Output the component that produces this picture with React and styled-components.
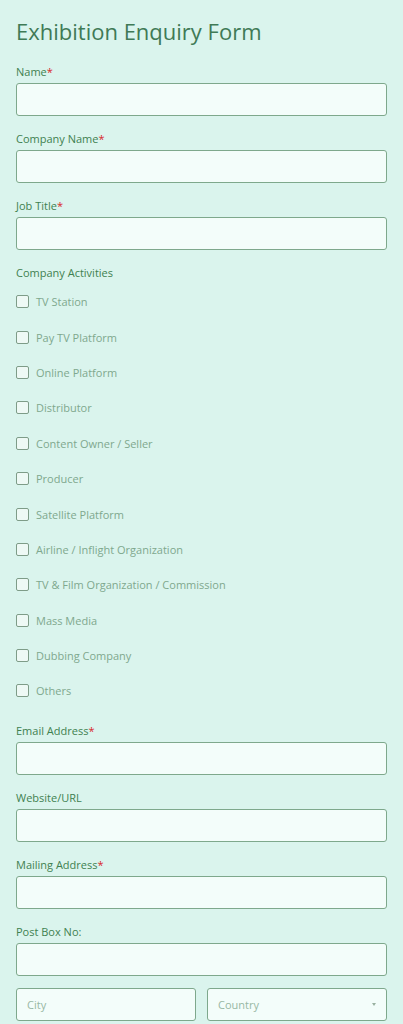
import React from 'react';
import styled, { createGlobalStyle } from 'styled-components';

const GlobalStyle = createGlobalStyle`
body {
  margin: 0;
  background: #daf4ed;
  font-family: "Open Sans", "Liberation Sans", sans-serif;
}
`;

const Page = styled.div`
padding: 16px 16px 0 16px;
background: #daf4ed;
min-height: 1024px;
box-sizing: border-box;
`;

const Title = styled.h1`
margin: 0 0 19px 0;
font-size: 22px;
line-height: 30px;
font-weight: 400;
color: #3f7a56;
letter-spacing: 0;
`;

const Field = styled.div`
display: flex;
flex-direction: column;
margin-bottom: 16px;
`;

const Label = styled.label`
font-size: 11px;
line-height: 14px;
color: #3f8150;
margin-bottom: 4px;
`;

const Star = styled.span`
color: #d9262a;
`;

const Input = styled.input`
box-sizing: border-box;
width: 100%;
height: 33px;
background: #f3fdfa;
border: 1px solid #7ea88c;
border-radius: 3px;
padding: 0 10px;
font-family: inherit;
font-size: 11px;
color: #6f9a7e;
outline: none;
&::placeholder {
  color: #98b8a4;
}
`;

const Group = styled.div`
display: flex;
flex-direction: column;
margin-bottom: 15px;
`;

const GroupLabel = styled(Label)`
margin-bottom: 4px;
`;

const Option = styled.label`
display: flex;
align-items: center;
height: 35.4px;
gap: 7px;
font-size: 11px;
color: #7fa88e;
`;

const Box = styled.span`
box-sizing: border-box;
width: 13px;
height: 13px;
border: 1px solid #7e9c88;
border-radius: 2px;
background: #eef9f5;
flex: none;
`;

const Row = styled.div`
display: grid;
grid-template-columns: 1fr 1fr;
gap: 11px;
margin-top: -4px;
`;

const SelectBox = styled.div`
box-sizing: border-box;
height: 33px;
background: #f3fdfa;
border: 1px solid #7ea88c;
border-radius: 3px;
padding: 0 10px;
display: flex;
align-items: center;
justify-content: space-between;
font-size: 11px;
color: #98b8a4;
`;

const Caret = styled.span`
width: 0;
height: 0;
border-left: 2.5px solid transparent;
border-right: 2.5px solid transparent;
border-top: 3px solid #98b0a0;
`;

const activities = [
  'TV Station',
  'Pay TV Platform',
  'Online Platform',
  'Distributor',
  'Content Owner / Seller',
  'Producer',
  'Satellite Platform',
  'Airline / Inflight Organization',
  'TV & Film Organization / Commission',
  'Mass Media',
  'Dubbing Company',
  'Others',
];

function TextField({ label, required }) {
  return (
    <Field>
      <Label>
        {label}
        {required && <Star>*</Star>}
      </Label>
      <Input />
    </Field>
  );
}

export default function App() {
  return (
    <>
      <GlobalStyle />
      <Page>
        <Title>Exhibition Enquiry Form</Title>
        <TextField label="Name" required />
        <TextField label="Company Name" required />
        <TextField label="Job Title" required />
        <Group>
          <GroupLabel>Company Activities</GroupLabel>
          {activities.map((a) => (
            <Option key={a}>
              <Box />
              {a}
            </Option>
          ))}
        </Group>
        <TextField label="Email Address" required />
        <TextField label="Website/URL" />
        <TextField label="Mailing Address" required />
        <TextField label="Post Box No:" />
        <Row>
          <Input placeholder="City" />
          <SelectBox>
            Country
            <Caret />
          </SelectBox>
        </Row>
      </Page>
    </>
  );
}
